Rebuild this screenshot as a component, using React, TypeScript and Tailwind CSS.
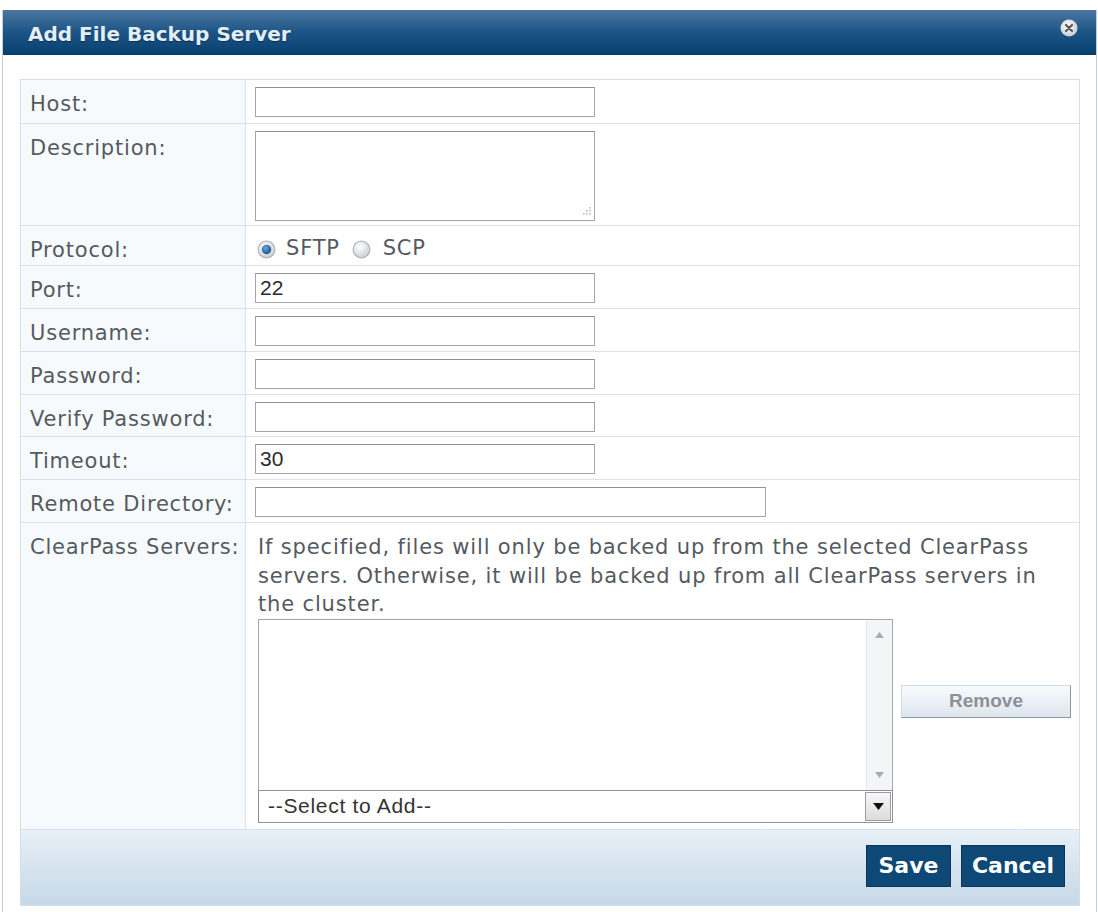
import React from "react";

const LABEL_FONT = { fontFamily: "'DejaVu Sans', Verdana, sans-serif" };
const ARIAL = { fontFamily: "'Liberation Sans', Arial, sans-serif" };

function CloseIcon() {
  return (
    <svg width="18" height="18" viewBox="0 0 18 18">
      <defs>
        <radialGradient id="cg" cx="0.45" cy="0.4" r="0.6">
          <stop offset="0" stopColor="#ffffff" />
          <stop offset="1" stopColor="#c9ced3" />
        </radialGradient>
      </defs>
      <circle cx="9" cy="9" r="8.5" fill="url(#cg)" />
      <path d="M6 6 L12 12 M12 6 L6 12" stroke="#55595e" strokeWidth="2.2" strokeLinecap="round" />
    </svg>
  );
}

function Radio({ checked }: { checked?: boolean }) {
  return (
    <svg width="19" height="19" viewBox="0 0 18 18" className="shrink-0">
      <defs>
        <radialGradient id={checked ? "rOn" : "rOff"} cx="0.4" cy="0.35" r="0.7">
          <stop offset="0" stopColor="#ffffff" />
          <stop offset="1" stopColor="#c8ccd0" />
        </radialGradient>
        <radialGradient id="dot" cx="0.4" cy="0.35" r="0.7">
          <stop offset="0" stopColor="#6aa8db" />
          <stop offset="1" stopColor="#0f4f86" />
        </radialGradient>
      </defs>
      <circle cx="9" cy="9" r="8" fill={checked ? "url(#rOn)" : "url(#rOff)"} stroke="#a6adb4" strokeWidth="1" />
      {checked && <circle cx="9" cy="9" r="4.5" fill="url(#dot)" />}
    </svg>
  );
}

function Grip() {
  return (
    <svg width="12" height="12" viewBox="0 0 12 12" className="absolute right-[3px] bottom-[3px]">
      {[
        [10, 2],
        [7, 5],
        [10, 5],
        [4, 8],
        [7, 8],
        [10, 8],
      ].map(([x, y], i) => (
        <rect key={i} x={x} y={y} width="1.6" height="1.6" fill="#b9bec3" />
      ))}
    </svg>
  );
}

function TextInput({ value, wide }: { value?: string; wide?: boolean }) {
  return (
    <div
      className={`${wide ? "w-[511px]" : "w-[340px]"} h-[30px] border border-[#a3a7ab] border-t-[#8e9297] bg-white pl-[4px] flex items-center text-[21px] text-[#2b2b2b]`}
      style={ARIAL}
    >
      {value}
    </div>
  );
}

function Row({
  label,
  h,
  children,
}: {
  label: string;
  h: string;
  children?: React.ReactNode;
}) {
  return (
    <div className={`flex ${h} border-b border-[#d7e2ec]`}>
      <div
        className="w-[225px] shrink-0 border-r border-[#d7e2ec] bg-[#f6fafd] pl-[9px] pt-[10px] text-[21px] leading-[28px] text-[#555a5f] tracking-[0.8px]"
        style={LABEL_FONT}
      >
        {label}
      </div>
      <div className="flex-1 pl-[9px] pt-[7px]">{children}</div>
    </div>
  );
}

export default function App() {
  return (
    <div className="w-[1098px] h-[912px] bg-white overflow-hidden">
      <div className="ml-[2px] mt-[10px] w-[1095px] h-[902px] bg-white border-l border-r border-[#c9ced4]">
        <div className="h-[45px] flex items-start justify-between pl-[25px] pr-[17px] bg-gradient-to-b from-[#4a77a0] via-[#1b5587] to-[#07416f] border-b border-[#0a3a62]">
          <span
            className="mt-[10px] text-[20px] leading-[28px] font-bold text-[#e3eef7]"
            style={{ fontFamily: "'DejaVu Sans', Verdana, sans-serif", textShadow: "0 1px 1px rgba(0,0,0,0.4)" }}
          >
            Add File Backup Server
          </span>
          <span className="mt-[9px] mr-[1px]">
            <CloseIcon />
          </span>
        </div>

        <div className="pl-[17px] pt-[24px]">
          <div className="w-[1060px] border border-[#d3dee9]">
            <Row label="Host:" h="h-[44px]">
              <TextInput />
            </Row>
            <Row label="Description:" h="h-[102px]">
              <div className="relative w-[340px] h-[90px] border border-[#a3a7ab] border-t-[#8e9297] bg-white">
                <Grip />
              </div>
            </Row>
            <Row label="Protocol:" h="h-[40px]">
              <div
                className="flex items-center h-[28px] text-[21px] text-[#555a5f] tracking-[0.8px] mt-[2px]"
                style={LABEL_FONT}
              >
                <span className="ml-[2px] flex">
                  <Radio checked />
                </span>
                <span className="ml-[10px]">SFTP</span>
                <span className="ml-[12px] flex">
                  <Radio />
                </span>
                <span className="ml-[12px]">SCP</span>
              </div>
            </Row>
            <Row label="Port:" h="h-[43px]">
              <TextInput value="22" />
            </Row>
            <Row label="Username:" h="h-[43px]">
              <TextInput />
            </Row>
            <Row label="Password:" h="h-[43px]">
              <TextInput />
            </Row>
            <Row label="Verify Password:" h="h-[42px]">
              <TextInput />
            </Row>
            <Row label="Timeout:" h="h-[43px]">
              <TextInput value="30" />
            </Row>
            <Row label="Remote Directory:" h="h-[43px]">
              <TextInput wide />
            </Row>
            <Row label="ClearPass Servers:" h="h-[307px]">
              <div className="mt-[3px] pl-[3px]">
                <p
                  className="text-[21px] leading-[28.5px] text-[#555a5f] tracking-[0.85px] whitespace-nowrap"
                  style={LABEL_FONT}
                >
                  If specified, files will only be backed up from the selected ClearPass
                  <br />
                  servers. Otherwise, it will be backed up from all ClearPass servers in
                  <br />
                  the cluster.
                </p>
                <div className="flex items-center mt-[0px]">
                  <div className="w-[635px]">
                    <div className="h-[171px] flex border border-[#a3a7ab] border-b-0 bg-white">
                      <div className="flex-1" />
                      <div className="w-[26px] bg-[#f4f5f6] border-l border-[#e3e5e8] flex flex-col items-center justify-between py-[12px]">
                        <svg width="9" height="6" viewBox="0 0 9 6">
                          <path d="M0 6 L4.5 0 L9 6 Z" fill="#a8adb2" />
                        </svg>
                        <svg width="9" height="6" viewBox="0 0 9 6">
                          <path d="M0 0 L4.5 6 L9 0 Z" fill="#a8adb2" />
                        </svg>
                      </div>
                    </div>
                    <div className="h-[33px] flex border border-[#8f9398] bg-white">
                      <div
                        className="flex-1 flex items-center pl-[9px] text-[21px] text-[#333] tracking-[0.7px]"
                        style={ARIAL}
                      >
                        --Select to Add--
                      </div>
                      <div className="w-[26px] my-[1px] mr-[1px] border border-[#9a9ea3] bg-gradient-to-b from-[#f7f7f7] to-[#dcdcdc] flex items-center justify-center">
                        <svg width="11" height="7" viewBox="0 0 11 7">
                          <path d="M0 0 L5.5 7 L11 0 Z" fill="#111" />
                        </svg>
                      </div>
                    </div>
                  </div>
                  <button
                    className="ml-[8px] mb-[38px] w-[170px] h-[33px] bg-gradient-to-b from-[#f8fbfd] to-[#dde6ee] border border-[#d3dbe3] border-r-[#8e969e] border-b-[#8e969e] text-[19px] font-bold text-[#8c9197]"
                    style={ARIAL}
                  >
                    Remove
                  </button>
                </div>
              </div>
            </Row>
            <div className="h-[75px] bg-gradient-to-b from-[#e8f0f7] via-[#d6e4ef] to-[#c6d8e7] flex items-center justify-end pr-[14px] gap-[10px]">
              <button
                className="h-[42px] w-[85px] bg-[#0e4876] border border-[#0a3458] text-white text-[22px] font-bold -mt-[4px]"
                style={LABEL_FONT}
              >
                Save
              </button>
              <button
                className="h-[42px] w-[104px] bg-[#0e4876] border border-[#0a3458] text-white text-[22px] font-bold -mt-[4px]"
                style={LABEL_FONT}
              >
                Cancel
              </button>
            </div>
          </div>
        </div>
      </div>
    </div>
  );
}
